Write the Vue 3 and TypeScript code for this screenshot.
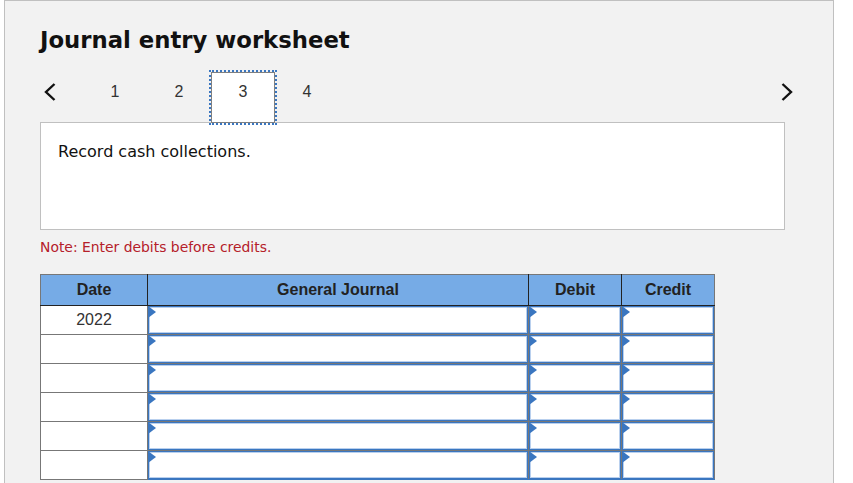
<template>
  <div class="card">
    <h1 class="title">Journal entry worksheet</h1>

    <div class="tabs">
      <svg class="chevron" width="12" height="20" viewBox="0 0 12 20">
        <path d="M10.5 2 L2 10 L10.5 18" />
      </svg>
      <div class="tab-list">
        <div v-for="tab in tabs" :key="tab" class="tab" :class="{ active: tab === activeTab }">
          {{ tab }}
        </div>
      </div>
      <svg class="chevron next" width="12" height="20" viewBox="0 0 12 20">
        <path d="M1.5 2 L10 10 L1.5 18" />
      </svg>
    </div>

    <div class="prompt">Record cash collections.</div>
    <div class="note">Note: Enter debits before credits.</div>

    <table class="journal">
      <thead>
        <tr>
          <th class="col-date">Date</th>
          <th class="col-journal">General Journal</th>
          <th class="col-debit">Debit</th>
          <th class="col-credit">Credit</th>
        </tr>
      </thead>
      <tbody>
        <tr v-for="(row, i) in rows" :key="i">
          <td class="date">{{ row }}</td>
          <td v-for="col in 3" :key="col" class="entry">
            <div class="field"></div>
            <span class="marker"></span>
          </td>
        </tr>
      </tbody>
    </table>
  </div>
</template>

<script setup lang="ts">
const tabs: number[] = [1, 2, 3, 4];
const activeTab = 3;
const rows: string[] = ["2022", "", "", "", "", ""];
</script>

<style>
html,
body {
  margin: 0;
  height: 483px;
  overflow: hidden;
  background: #fff;
}
</style>

<style scoped>
.card {
  box-sizing: border-box;
  width: 830px;
  height: 483px;
  margin-left: 4px;
  padding: 0 35px;
  background: #f2f2f2;
  border: 1px solid #c0c0c0;
  border-bottom: 0;
  font-family: "DejaVu Sans", sans-serif;
  color: #111;
}
.title {
  margin: 0;
  padding-top: 24px;
  font-size: 22.75px;
  line-height: 30px;
  font-weight: bold;
}
.tabs {
  display: flex;
  align-items: flex-start;
  height: 54px;
  margin-top: 15px;
  margin-bottom: -2px;
  position: relative;
  z-index: 1;
}
.chevron {
  flex: none;
  margin-left: 4px;
  margin-top: 12px;
}
.chevron path {
  fill: none;
  stroke: #111;
  stroke-width: 2.4;
}
.chevron.next {
  margin-left: auto;
  margin-right: 5px;
}
.tab-list {
  display: flex;
  margin-left: 27px;
}
.tab {
  box-sizing: border-box;
  width: 64px;
  height: 54px;
  padding-top: 12px;
  line-height: 20px;
  text-align: center;
  font-family: "Liberation Sans", Arial, sans-serif;
  font-size: 16px;
  color: #333;
}
.tab.active {
  height: 51px;
  margin-top: 2px;
  padding-top: 9px;
  background: #fff;
  border: 1px solid #808080;
  outline: 2px dotted #3a76c0;
}
.prompt {
  box-sizing: border-box;
  width: 745px;
  height: 108px;
  padding: 19px 17px;
  background: #fff;
  border: 1px solid #c0c0c0;
  font-size: 16px;
  line-height: 20px;
}
.note {
  margin-top: 8px;
  font-size: 13.9px;
  line-height: 18px;
  color: #b5202a;
}
.journal {
  margin-top: 18px;
  width: 674px;
  table-layout: fixed;
  border-collapse: collapse;
  font-family: "Liberation Sans", Arial, sans-serif;
  font-size: 16px;
  color: #333;
}
.journal th {
  height: 30px;
  padding: 0;
  background: #76abe6;
  border: 1px solid #222;
  border-top-color: #777;
  font-weight: bold;
  color: #222;
}
.journal th:first-child {
  border-left-color: #777;
}
.journal th:last-child {
  border-right-color: #777;
}
.col-date {
  width: 106px;
}
.col-journal {
  width: 380px;
}
.col-debit {
  width: 92px;
}
.col-credit {
  width: 92px;
}
.journal td {
  height: 28px;
  padding: 0;
  background: #fff;
  border: 1px solid #777;
  text-align: center;
}
.entry {
  position: relative;
}
tbody tr:last-child .entry {
  border-bottom-color: #3a76c0;
}
.field {
  box-sizing: border-box;
  height: 28px;
  background: #fff;
  border: 1px solid #3a76c0;
  box-shadow: inset 0 0 0 1px #b9d0ee;
}
.marker {
  position: absolute;
  left: 0;
  top: 0;
  width: 0;
  height: 0;
  border-top: 6px solid transparent;
  border-bottom: 6px solid transparent;
  border-left: 8px solid #3a76c0;
}
</style>
